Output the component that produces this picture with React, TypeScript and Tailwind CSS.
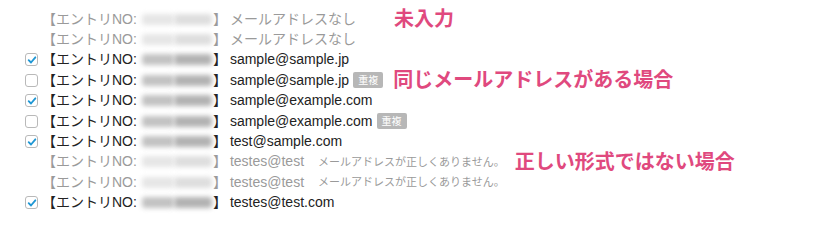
import React from 'react';

type Entry = {
    email: string;
    checked?: boolean;
    disabled?: boolean;
    duplicate?: boolean;
    error?: string;
    note?: string;
    noteGap?: string;
};

const entries: Entry[] = [
    { email: 'メールアドレスなし', disabled: true, note: '未入力', noteGap: 'ml-[38px]' },
    { email: 'メールアドレスなし', disabled: true },
    { email: 'sample@sample.jp', checked: true },
    { email: 'sample@sample.jp', duplicate: true, note: '同じメールアドレスがある場合', noteGap: 'ml-[10px]' },
    { email: 'sample@example.com', checked: true },
    { email: 'sample@example.com', duplicate: true },
    { email: 'test@sample.com', checked: true },
    { email: 'testes@test', disabled: true, error: 'メールアドレスが正しくありません。', note: '正しい形式ではない場合', noteGap: 'ml-[10px]' },
    { email: 'testes@test', disabled: true, error: 'メールアドレスが正しくありません。' },
    { email: 'testes@test.com', checked: true },
];

const Checkbox: React.FC<{ checked?: boolean; hidden?: boolean }> = ({ checked, hidden }) => (
    <span
        className={`flex h-[13px] w-[13px] shrink-0 items-center justify-center rounded-[3px] border border-[#b9b9b9] bg-white ${hidden ? 'invisible' : ''}`}
    >
        {checked && (
            <svg viewBox="0 0 12 12" className="h-[10px] w-[10px]">
                <path d="M2 6.2 L4.8 9 L10 2.8" fill="none" stroke="#1f97d4" strokeWidth="2.2" strokeLinecap="round" strokeLinejoin="round" />
            </svg>
        )}
    </span>
);

// entry number is masked in the screenshot, so just a soft smudge
const Masked: React.FC<{ light?: boolean }> = ({ light }) => (
    <span className="flex w-[76px] items-center pl-[5px] pr-[1px]">
        <span className={`h-[11px] w-[32px] rounded-[3px] blur-[2.5px] ${light ? 'bg-[#e6e6e6]' : 'bg-[#c2c2c2]'}`} />
        <span className={`h-[11px] flex-1 rounded-[3px] blur-[2.5px] ${light ? 'bg-[#dedede]' : 'bg-[#b2b2b2]'}`} />
    </span>
);

const App: React.FC = () => {
    return (
        <div
            className="h-[222px] w-[830px] bg-white pl-[25px] pt-[9px] text-[14px]"
            style={{ fontFamily: '"Liberation Sans", "Noto Sans CJK JP", sans-serif' }}
        >
            {entries.map((entry, i) => {
                const color = entry.disabled ? 'text-[#9a9a9a]' : 'text-[#222]';
                return (
                    <div key={i} className={`flex h-[20.4px] items-center whitespace-nowrap ${color}`}>
                        <Checkbox checked={entry.checked} hidden={entry.disabled} />
                        <span className="ml-[4px]">【エントリNO:</span>
                        <Masked light={entry.disabled} />
                        <span>】</span>
                        <span className="ml-[3px]">{entry.email}</span>
                        {entry.duplicate && (
                            <span className="ml-[4px] flex h-[16px] items-center rounded-[2px] bg-[#b7b7b7] px-[5px] text-[10px] text-white">
                                重複
                            </span>
                        )}
                        {entry.error && (
                            <span className="ml-[14px] text-[11px] text-[#9a9a9a]">{entry.error}</span>
                        )}
                        {entry.note && (
                            <span className={`${entry.noteGap} text-[20px] font-bold leading-[20px] text-[#e0497e]`}>
                                {entry.note}
                            </span>
                        )}
                    </div>
                );
            })}
        </div>
    );
};

export default App;
